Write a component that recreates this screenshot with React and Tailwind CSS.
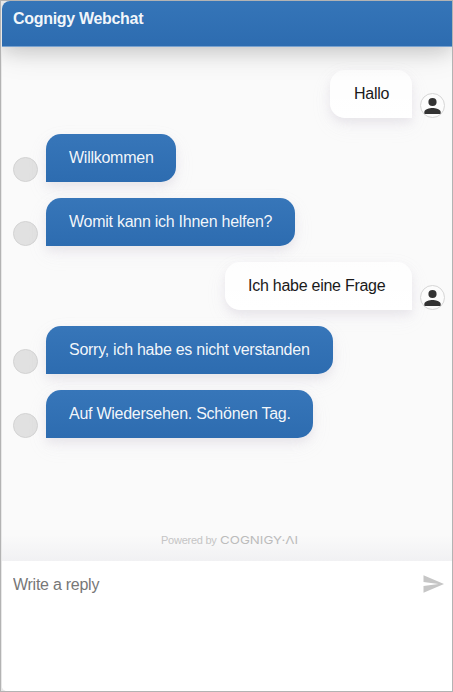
import React from 'react';

const messages = [
  { from: 'user', text: 'Hallo', width: 'w-[82px] pl-6' },
  { from: 'bot', text: 'Willkommen', width: 'w-[130px] pl-[23px]' },
  { from: 'bot', text: 'Womit kann ich Ihnen helfen?', width: 'w-[249px] pl-[23px]' },
  { from: 'user', text: 'Ich habe eine Frage', width: 'w-[187px] pl-[23px]' },
  { from: 'bot', text: 'Sorry, ich habe es nicht verstanden', width: 'w-[287px] pl-[23px]' },
  { from: 'bot', text: 'Auf Wiedersehen. Schönen Tag.', width: 'w-[267px] pl-[23px]' },
];

const bubble =
  'flex h-12 shrink-0 items-center whitespace-nowrap text-[16px] leading-5 tracking-[-0.26px] rounded-t-[15px] shadow-[0_5px_9px_0_rgba(151,124,156,0.1),0_5px_16px_0_rgba(203,195,212,0.1),0_8px_20px_0_rgba(216,212,221,0.1)]';

function UserAvatar() {
  return (
    <div className="flex size-[25px] shrink-0 items-center justify-center overflow-hidden rounded-full border border-[#d6d6d6] bg-[#fcfcfc]">
      <svg viewBox="0 0 24 24" className="size-6 shrink-0" fill="#333333">
        <circle cx="11.5" cy="8" r="4.1" />
        <path d="M11.500 14c-2.700 0-8.200 1.300-8.200 4v2h16.400v-2c0-2.700-5.500-4-8.200-4z" />
      </svg>
    </div>
  );
}

function Message({ from, text, width }) {
  if (from === 'user') {
    return (
      <div className="flex items-end justify-end gap-2">
        <div className={`${bubble} ${width} rounded-bl-[15px] bg-gradient-to-b from-white/75 to-white text-[#1a1a1a]`}>{text}</div>
        <UserAvatar />
      </div>
    );
  }
  return (
    <div className="flex items-end gap-2">
      <div className="size-[25px] shrink-0 rounded-full border border-[#d3d3d3] bg-[#e1e1e1]" />
      <div className={`${bubble} ${width} rounded-br-[15px] bg-gradient-to-b from-[#3776b9] to-[#2d6cb0] text-white/95`}>{text}</div>
    </div>
  );
}

export default function App() {
  return (
    <div className="h-[692px] w-[453px] overflow-hidden border border-[#b3b3b3] bg-[#e8e8e8] pl-px font-['Liberation_Sans',Arial,sans-serif]">
      <div className="flex h-[690px] flex-col overflow-hidden rounded-tl-[8px] rounded-bl-[5px] bg-white">
        <header className="z-10 flex h-[46px] shrink-0 items-start border-b border-[#79a2cf] bg-gradient-to-b from-[#3575b8] to-[#2d6cb0] pl-[11px] pt-2 text-[16px] font-bold leading-5 tracking-[-0.31px] text-white/95 shadow-[0_5px_18px_0_rgba(0,0,0,0.12),0_5px_32px_0_rgba(0,0,0,0.12)]">
          Cognigy Webchat
        </header>
        <main className="flex h-[514px] shrink-0 flex-col bg-[#fafafa] bg-[linear-gradient(to_top,#f1f1f3_0,#fafafa_26px)]">
          <div className="flex flex-col gap-4 pl-[11px] pr-[7px] pt-[23px]">
            {messages.map((m) => (
              <Message key={m.text} {...m} />
            ))}
          </div>
          <footer className="mt-auto flex h-[30px] shrink-0 items-start pl-[159px] pt-[2px] text-[#c5c5c5]">
            <span className="w-[59px] whitespace-nowrap text-[11px] leading-[14px] tracking-[-0.25px]">Powered by</span>
            <svg width="80" height="14" viewBox="0 0 80 14" className="shrink-0" aria-label="COGNIGY·AI">
              <text x="0" y="11" textLength="78" lengthAdjust="spacingAndGlyphs" fontSize="11" fontWeight="400" fill="#bcbcbc" fontFamily="Inter, sans-serif">COGNIGY·ΛI</text>
            </svg>
          </footer>
        </main>
        <div className="flex grow items-start justify-between bg-white pl-[11px] pr-[7px] pt-[11px]">
          <textarea
            placeholder="Write a reply"
            className="h-24 w-[380px] resize-none border-0 bg-transparent p-0 pt-[3px] text-[16px] leading-5 tracking-[-0.26px] placeholder-[#777777] outline-none"
          />
          <svg viewBox="0 0 24 24" className="size-6 shrink-0" fill="#c6c6c6">
            <path d="M2.500 20.800 23 12 2.500 3.300v6.700l15 2-15 2z" />
          </svg>
        </div>
      </div>
    </div>
  );
}
